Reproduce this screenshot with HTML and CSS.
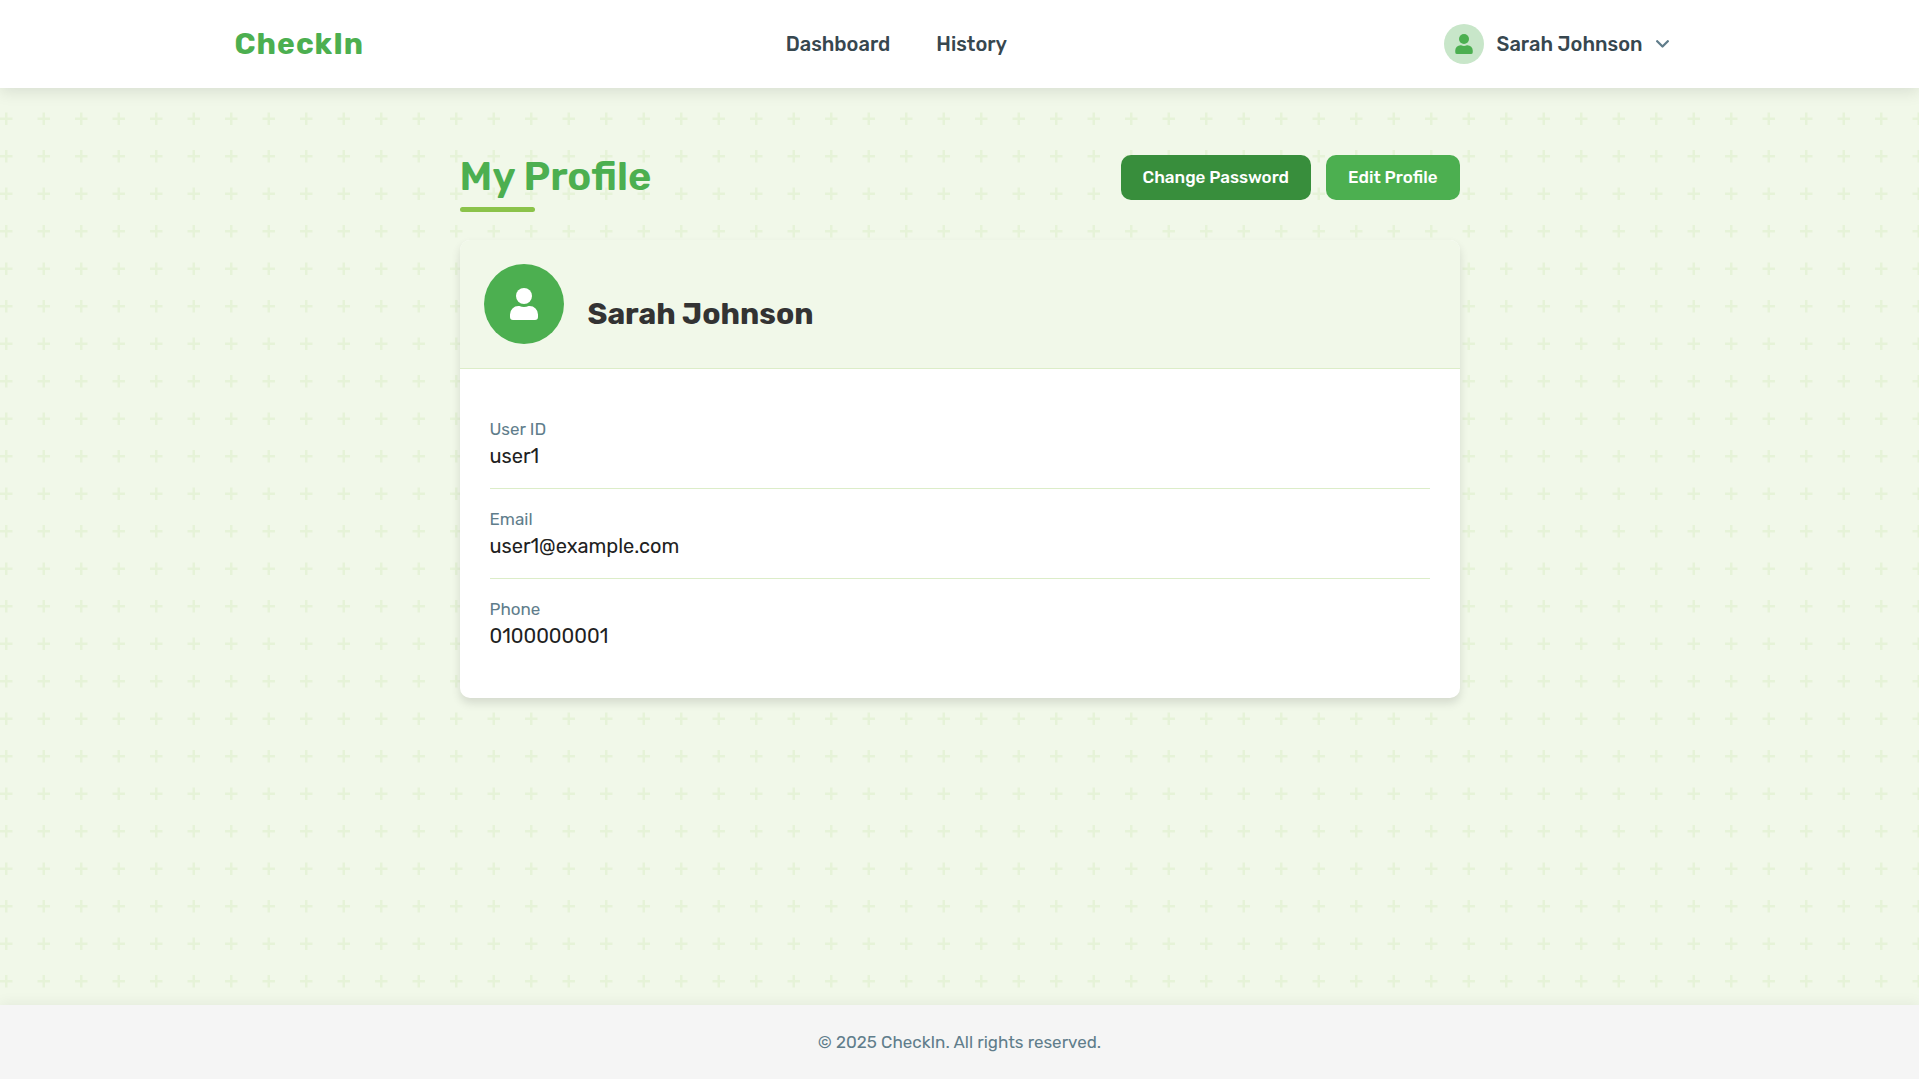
FILE: index.html
```html
<!DOCTYPE html>
<html lang="en">
<head>
<meta charset="utf-8">
<meta name="viewport" content="width=device-width, initial-scale=1">
<title>My Profile - CheckIn</title>
<link rel="stylesheet" href="styles.css">
</head>
<body>
<header class="site-header">
  <div class="site-header-inner">
    <a class="logo" href="#">CheckIn</a>
    <nav class="site-nav" aria-label="Main">
      <a href="#">Dashboard</a>
      <a href="#">History</a>
    </nav>
    <button class="user-menu" type="button" aria-haspopup="true">
      <span class="user-avatar">
        <svg viewBox="0 0 28 32" width="18" height="20" aria-hidden="true"><circle cx="14" cy="8" r="8"/><path d="M19.600 18h-1a10.900 10.900 0 0 1-9.200 0h-1A8.400 8.400 0 0 0 0 26.400V29a3 3 0 0 0 3 3h22a3 3 0 0 0 3-3v-2.600A8.400 8.400 0 0 0 19.600 18z"/></svg>
      </span>
      <span>Sarah Johnson</span>
      <svg class="chevron" viewBox="0 0 13 8" width="13" height="8" aria-hidden="true"><path d="M1.200 1.200l5.300 5.300 5.300-5.300"/></svg>
    </button>
  </div>
</header>
<main class="profile">
  <div class="profile-top">
    <h1>My Profile</h1>
    <div class="actions">
      <button class="btn btn-dark" type="button">Change Password</button>
      <button class="btn" type="button">Edit Profile</button>
    </div>
  </div>
  <section class="card">
    <div class="card-header">
      <span class="card-avatar">
        <svg viewBox="0 0 28 32" width="28" height="32" aria-hidden="true"><circle cx="14" cy="8" r="8"/><path d="M19.600 18h-1a10.900 10.900 0 0 1-9.200 0h-1A8.400 8.400 0 0 0 0 26.400V29a3 3 0 0 0 3 3h22a3 3 0 0 0 3-3v-2.600A8.400 8.400 0 0 0 19.600 18z"/></svg>
      </span>
      <h2>Sarah Johnson</h2>
    </div>
    <dl class="details">
      <div><dt>User ID</dt><dd>user1</dd></div>
      <div><dt>Email</dt><dd>user1@example.com</dd></div>
      <div><dt>Phone</dt><dd>0100000001</dd></div>
    </dl>
  </section>
</main>
<footer class="site-footer">© 2025 CheckIn. All rights reserved.</footer>
</body>
</html>
```
FILE: styles.css
```css
* { box-sizing: border-box; }

body {
  margin: 0;
  min-height: 100vh;
  display: flex;
  flex-direction: column;
  font-family: Rubik, Inter, sans-serif;
  font-size: 20px;
  color: #212121;
  background: #f1f8e9 url("data:image/svg+xml,%3Csvg xmlns='http://www.w3.org/2000/svg' width='60' height='60' viewBox='0 0 60 60'%3E%3Cpath fill='%238bc34a' fill-opacity='.1' d='M36 34v-4h-2v4h-4v2h4v4h2v-4h4v-2h-4zm0-30V0h-2v4h-4v2h4v4h2V6h4V4h-4zM6 34v-4H4v4H0v2h4v4h2v-4h4v-2H6zM6 4V0H4v4H0v2h4v4h2V6h4V4H6z'/%3E%3C/svg%3E") 0 0 / 75px 75px;
}

a { color: inherit; text-decoration: none; }
button { font-family: inherit; border: 0; cursor: pointer; }
h1, h2, dl, dd { margin: 0; }

.site-header {
  background: #fff;
  box-shadow: 0 4px 15px rgba(0, 0, 0, .1);
}
.site-header-inner {
  max-width: 1500px;
  height: 88px;
  margin: 0 auto;
  padding: 0 25px;
  display: flex;
  align-items: center;
  justify-content: space-between;
}
.logo { font-size: 30px; font-weight: 700; letter-spacing: 1px; color: #4caf50; }
.site-nav { display: flex; gap: 46px; font-weight: 500; color: #37474f; }

.user-menu {
  display: flex;
  align-items: center;
  padding: 0 15px;
  background: none;
  font-size: 20px;
  font-weight: 500;
  color: #37474f;
}
.user-avatar {
  width: 40px;
  height: 40px;
  margin-right: 13px;
  display: flex;
  align-items: center;
  justify-content: center;
  border-radius: 50%;
  background: #c8e6c9;
  fill: #4caf50;
}
.chevron {
  margin-left: 14px;
  fill: none;
  stroke: #607d8b;
  stroke-width: 2.3;
  stroke-linecap: round;
  stroke-linejoin: round;
}

.profile {
  width: 100%;
  max-width: 1050px;
  flex: 1;
  margin: 0 auto;
  padding: 64px 25px;
}
.profile-top {
  display: flex;
  align-items: center;
  justify-content: space-between;
  margin-bottom: 38px;
}
h1 {
  position: relative;
  font-size: 40px;
  line-height: 50px;
  font-weight: 600;
  color: #4caf50;
}
h1::after {
  content: "";
  position: absolute;
  left: 0;
  bottom: -10px;
  width: 75px;
  height: 5px;
  border-radius: 3px;
  background: #8bc34a;
}
.actions { display: flex; gap: 15px; }
.btn {
  height: 45px;
  padding: 0 22px;
  border-radius: 10px;
  font-size: 17px;
  font-weight: 500;
  color: #fff;
  background: #4caf50;
}
.btn-dark { background: #388e3c; }

.card {
  overflow: hidden;
  border-radius: 10px;
  background: #fff;
  box-shadow: 0 5px 10px rgba(0, 0, 0, .12);
}
.card-header {
  display: flex;
  align-items: center;
  gap: 24px;
  padding: 24px;
  border-bottom: 1px solid #dcedc8;
  background: #f1f8e9;
}
.card-avatar {
  width: 80px;
  height: 80px;
  display: flex;
  align-items: center;
  justify-content: center;
  border-radius: 50%;
  background: #4caf50;
  fill: #fff;
}
h2 {
  padding-top: 20px;
  font-size: 30px;
  line-height: 36px;
  font-weight: 700;
  color: #333;
}
.details { padding: 30px; }
.details div { padding: 17px 0 18px; border-bottom: 1px solid #dcedc8; }
.details div:last-child { border-bottom: 0; }
.details dt { font-size: 17px; line-height: 27px; color: #607d8b; }
.details dd { line-height: 27px; }

.site-footer {
  padding: 24px;
  text-align: center;
  font-size: 17px;
  line-height: 26px;
  color: #607d8b;
  background: #f5f5f5;
  box-shadow: 0 -3px 12px rgba(0, 0, 0, .05);
}
```
